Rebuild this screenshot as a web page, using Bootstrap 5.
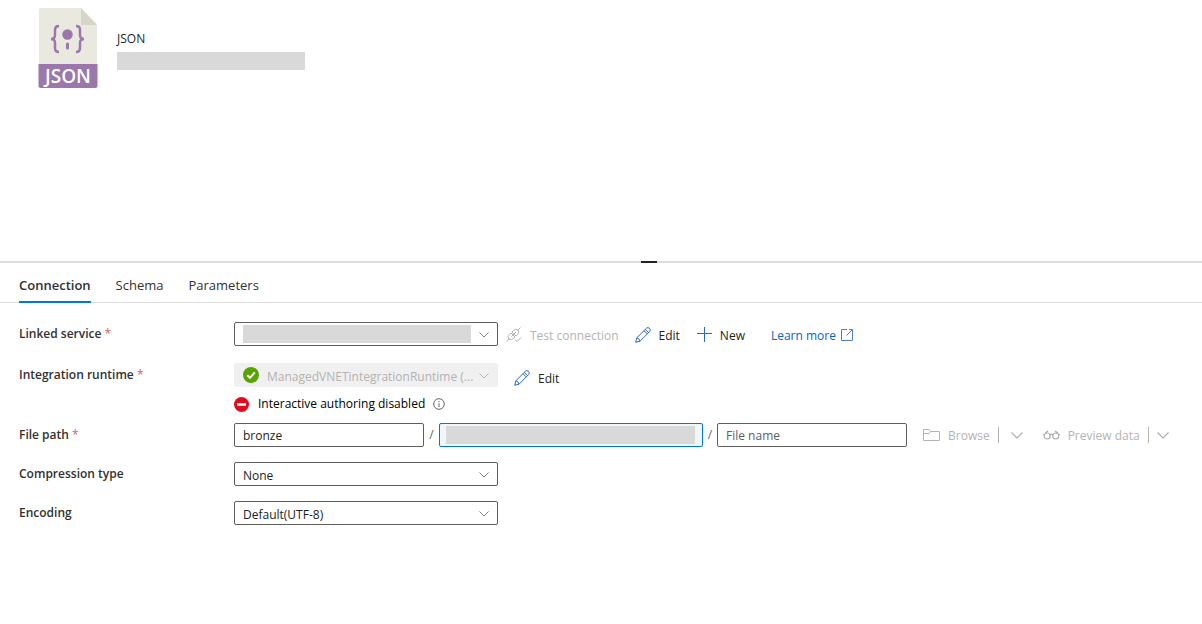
<!DOCTYPE html>
<html lang="en">
<head>
<meta charset="utf-8">
<meta name="viewport" content="width=device-width, initial-scale=1">
<title>JSON dataset</title>
<link rel="stylesheet" href="https://cdn.jsdelivr.net/npm/bootstrap@5.3.0/dist/css/bootstrap.min.css">
<style>
  body { font-family: "Open Sans", "Noto Sans", sans-serif; font-size: 12px; line-height: 18px; color: #201f1e; background: #fff; }
  .dataset-head { min-height: 261px; padding: 8px 38px; }
  .redacted { background: #d9d9d9; }
  .head-name { width: 188px; height: 18px; }
  .head-text { margin: 22px 0 0 19px; }
  .splitter { height: 2px; background: #ddd; padding-left: 96px; }
  .splitter span { width: 16px; height: 2px; background: #222; }
  .tabs { border-bottom: 1px solid #ddd; padding: 0 19px; gap: 25px; height: 40px; font-size: 13px; }
  .tabs .nav-link { padding: 0; height: 40px; line-height: 44px; color: #323130; }
  .tabs .nav-link.active { font-weight: 600; border-bottom: 2px solid #0078d4; }
  .settings { padding: 19px 19px; }
  .field { display: grid; grid-template-columns: 215px 1fr; margin-bottom: 15px; }
  .field-linked { min-height: 26px; }
  .field-tall { margin-bottom: 8px; }
  .field > label { line-height: 24px; font-weight: 600; color: #323130; }
  .req { color: #d13438; opacity: .8; font-weight: 400; }
  .box { width: 264px; height: 24px; border: 1px solid #605e5c; border-radius: 2px; padding: 0 8px; font-size: 12px; line-height: 22px; color: #201f1e; background-color: #fff; }
  .box-sm { width: 190px; }
  .box:focus { box-shadow: none; border-color: #0078d4; }
  .box::placeholder { color: #605e5c; opacity: 1; }
  .box.current { border-color: #0078d4; background-color: #eff6fc; }
  select.box { appearance: none; padding-top: 2px; padding-right: 16px; background: #fff url("data:image/svg+xml,%3Csvg xmlns='http://www.w3.org/2000/svg' viewBox='0 0 10 6'%3E%3Cpath d='M.5.5 5 5 9.5.5' fill='none' stroke='%23807e7c'/%3E%3C/svg%3E") no-repeat right 8px bottom 7px / 10px 6px; }
  select.box:disabled { padding-left: 32px; border-color: #f0f0f0; background-color: #f0f0f0; background-image: url("data:image/svg+xml,%3Csvg xmlns='http://www.w3.org/2000/svg' viewBox='0 0 10 6'%3E%3Cpath d='M.5.5 5 5 9.5.5' fill='none' stroke='%23b5b3b1'/%3E%3C/svg%3E"); color: #b5b3b1; opacity: 1; }
  .cover { position: absolute; top: 3px; bottom: 3px; left: 9px; right: 27px; pointer-events: none; }
  .cover-wide { left: 7px; right: 8px; }
  .ok { position: absolute; left: 9px; top: 4px; }
  .cmd { border: 0; border-radius: 0; padding: 0; font-size: 12px; line-height: 19px; height: 24px; color: #201f1e; display: inline-flex; align-items: center; gap: 8px; white-space: nowrap; }
  .cmd:disabled { border: 0; color: #b5b3b1; opacity: 1; }
  .cmd-tall { height: 30px; }
  .more { color: #0067c0; gap: 5px; margin-left: 10px; text-decoration: none; }
  .after-box { margin-left: 8px; gap: 16px; padding-top: 1px; }
  .status { height: 22px; color: #000; line-height: 20px; }
  .slash { width: 15px; text-align: center; line-height: 24px; color: #605e5c; }
  .slash-last { width: 14px; }
  .browse { margin-left: 16px; gap: 8px; }
  .browse + .browse { margin-left: 20px; }
  .bar-line { width: 1px; height: 16px; background: #b5b3b1; }
  svg { flex: none; }
</style>
</head>
<body>
<header class="dataset-head d-flex align-items-start">
  <svg width="60" height="80" viewBox="0 0 60 80" aria-hidden="true">
    <path d="M3 0H43L59 16V57H1V2Q1 0 3 0Z" fill="#e9e9df"/>
    <path d="M43 0 59 17H43Z" fill="#d6d6c8"/>
    <path d="M.5 56H59.500V78Q59.500 80 57.500 80H2.500Q.5 80 .5 78Z" fill="#9b77ab"/>
    <path d="M21 18Q17 18 17 22V27Q17 31 13 31Q17 31 17 35V40Q17 44 21 44M38 18Q42 18 42 22V27Q42 31 46 31Q42 31 42 35V40Q42 44 38 44" fill="none" stroke="#9b77ab" stroke-width="2.500"/>
    <circle cx="29.500" cy="26.500" r="5.200" fill="#9b77ab"/>
    <path d="M29.500 36V40" stroke="#9b77ab" stroke-width="3" stroke-linecap="round"/>
    <text x="30" y="75" text-anchor="middle" font-family="Open Sans, sans-serif" font-size="19" font-weight="600" fill="#fff">JSON</text>
  </svg>
  <div class="head-text">
    <div>JSON</div>
    <div class="redacted head-name mt-1"></div>
  </div>
</header>
<div class="splitter d-flex justify-content-center"><span></span></div>
<nav class="nav tabs" aria-label="Dataset settings">
  <a class="nav-link active" href="#connection" aria-current="page">Connection</a>
  <a class="nav-link" href="#schema">Schema</a>
  <a class="nav-link" href="#parameters">Parameters</a>
</nav>

<svg class="d-none" aria-hidden="true">
  <symbol id="pencil" viewBox="0 0 16 16"><path d="M.7 15.300 1.800 10.800 11.600 1.100Q13 0 14.500 1.300Q16 2.900 14.800 4.400L5 14.200ZM10.300 2.400 13.500 5.600M9 3.700 12.200 6.900M1.800 10.800Q4.500 11.300 5 14.200" fill="none" stroke="#2f67c2"/></symbol>
  <symbol id="chev" viewBox="0 0 12 7"><path d="M.5.5 6 6 11.500.5" fill="none" stroke="#b0aeac" stroke-width="1.200"/></symbol>
</svg>

<form class="settings" id="connection">
  <div class="field field-linked">
    <label for="linked">Linked service <span class="req">*</span></label>
    <div class="d-flex">
      <div class="position-relative align-self-start">
        <select class="box d-block" id="linked"><option></option></select>
        <span class="cover redacted"></span>
      </div>
      <div class="d-flex after-box">
        <button type="button" class="btn cmd" disabled><svg width="16" height="16" viewBox="0 0 16 16" fill="none" stroke="#b5b3b1"><path d="M.5 14.500 3 12M3 12Q1 9.500 3.500 7.500L5 6 9 10 7.500 11.500Q5.500 13.500 3 12ZM6 5 7.500 3.500Q9.500 1.500 12 3Q14 5.500 11.500 7.500L10 9ZM12 3 14.500.5M5.500 9.500 10 5M9 12.500 11 14.500 15 10.500"/></svg>Test connection</button>
        <button type="button" class="btn cmd"><svg width="16" height="16"><use href="#pencil"/></svg>Edit</button>
        <button type="button" class="btn cmd"><svg width="16" height="16" viewBox="0 0 16 16"><path d="M8.500 0V15M1 6.500H16" stroke="#2468b8"/></svg>New</button>
        <a class="cmd more" href="#learn">Learn more<svg width="12" height="12" viewBox="0 0 12 12" fill="none" stroke="#4f7fca"><path d="M6 .5H.5V11.500H11.500V.5H8M11.500.5 5.500 6.500"/></svg></a>
      </div>
    </div>
  </div>
  <div class="field field-tall">
    <label for="runtime">Integration runtime <span class="req">*</span></label>
    <div>
      <div class="d-flex">
        <div class="position-relative align-self-start">
          <select class="box d-block" id="runtime" disabled><option>ManagedVNETintegrationRuntime (...</option></select>
          <svg class="ok" width="16" height="16" viewBox="0 0 16 16"><circle cx="8" cy="8" r="8" fill="#57a300"/><path d="M4.300 8.200 7 10.800 11.800 5.300" fill="none" stroke="#fff" stroke-width="2"/></svg>
        </div>
        <button type="button" class="btn cmd cmd-tall ms-3"><svg width="16" height="16"><use href="#pencil"/></svg>Edit</button>
      </div>
      <div class="status d-flex align-items-center">
        <svg width="16" height="15" viewBox="0 0 16 15"><circle cx="7.500" cy="7.500" r="7.500" fill="#e00b1c"/><path d="M3 7.500H12" stroke="#fff" stroke-width="2.500"/></svg>
        <span class="ms-2 me-2">Interactive authoring disabled</span>
        <svg width="12" height="12" viewBox="0 0 12 12" fill="none" stroke="#555" stroke-width=".9"><circle cx="6" cy="6" r="5.300"/><path d="M6 5.300V9M6 3V4.200"/></svg>
      </div>
    </div>
  </div>
  <div class="field">
    <label for="container">File path <span class="req">*</span></label>
    <div class="d-flex">
      <input class="box box-sm" id="container" type="text" value="bronze">
      <span class="slash">/</span>
      <div class="position-relative">
        <input class="box current d-block" type="text" aria-label="Directory">
        <span class="cover cover-wide redacted"></span>
      </div>
      <span class="slash slash-last">/</span>
      <input class="box box-sm" type="text" aria-label="File name" placeholder="File name">
      <div class="d-flex align-items-center browse">
        <button type="button" class="btn cmd" disabled><svg width="17" height="12" viewBox="0 0 17 12" fill="none" stroke="#b5b3b1"><path d="M.5 11.500V.5H6L7.500 2.500H16.500V11.500ZM.5 4.500H6L7.500 2.500"/></svg>Browse</button>
        <span class="bar-line"></span>
        <button type="button" class="btn cmd ms-1" aria-label="Browse options" disabled><svg width="12" height="7"><use href="#chev"/></svg></button>
      </div>
      <div class="d-flex align-items-center browse">
        <button type="button" class="btn cmd" disabled><svg width="17" height="10" viewBox="0 0 17 10" fill="none" stroke="#b0aeac" stroke-width="1.200"><circle cx="4.200" cy="6" r="3"/><circle cx="12.800" cy="6" r="3"/><path d="M7 5Q8.500 3.500 10 5M0 4.500H2M15 4.500H17M2 3.500 5 .8M15 3.500 12 .8"/></svg>Preview data</button>
        <span class="bar-line"></span>
        <button type="button" class="btn cmd" aria-label="Preview options" disabled><svg width="12" height="7"><use href="#chev"/></svg></button>
      </div>
    </div>
  </div>
  <div class="field">
    <label for="compression">Compression type</label>
    <select class="box" id="compression"><option>None</option></select>
  </div>
  <div class="field">
    <label for="encoding">Encoding</label>
    <select class="box" id="encoding"><option>Default(UTF-8)</option></select>
  </div>
</form>
<script src="https://cdn.jsdelivr.net/npm/bootstrap@5.3.0/dist/js/bootstrap.bundle.min.js"></script>
</body>
</html>
